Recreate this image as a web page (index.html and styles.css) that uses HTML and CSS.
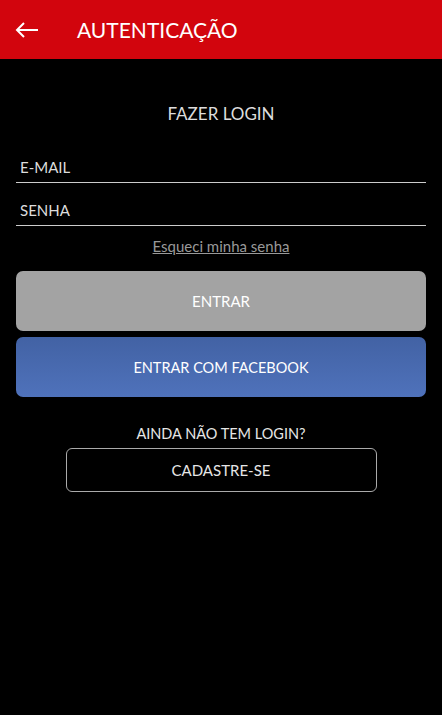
FILE: index.html
```html
<!DOCTYPE html>
<html lang="pt">
<head>
  <meta charset="UTF-8" />
  <meta name="viewport" content="width=device-width, initial-scale=1.0" />
  <title>Autenticação</title>
  <link rel="stylesheet" href="styles.css">
</head>
<body>
  <header class="topbar">
    <svg class="back" width="24" height="16" viewBox="0 0 24 16">
      <path d="M23 8H2M9 1L2 8l7 7" fill="none" stroke="#fff" stroke-width="2" />
    </svg>
    <h1>AUTENTICAÇÃO</h1>
  </header>

  <main class="container">
    <h2>FAZER LOGIN</h2>

    <div class="field">E-MAIL</div>
    <div class="field">SENHA</div>

    <a class="forgot" href="#">Esqueci minha senha</a>

    <button class="btn btn-login">ENTRAR</button>
    <button class="btn btn-facebook">ENTRAR COM FACEBOOK</button>

    <p class="signup-text">AINDA NÃO TEM LOGIN?</p>
    <button class="btn-signup">CADASTRE-SE</button>
  </main>
</body>
</html>
```

FILE: styles.css
```css
body {
  margin: 0;
  font-family: Lato, 'Noto Sans', sans-serif;
  background: #000;
  color: #e6e6e6;
  min-height: 100vh;
}

.topbar {
  background: #d2050d;
  height: 59px;
  display: flex;
  align-items: center;
  padding-left: 15px;
}

.topbar .back {
  display: block;
}

.topbar h1 {
  margin: 0 0 0 38px;
  font-size: 21px;
  font-weight: 400;
  color: #fff;
}

.container {
  padding: 0 16px;
  display: flex;
  flex-direction: column;
  align-items: center;
}

h2 {
  margin: 44px 0 34px;
  font-size: 17px;
  font-weight: 400;
  color: #ddd;
}

.field {
  align-self: stretch;
  font-size: 15px;
  padding: 0 4px 6px;
  border-bottom: 1.5px solid #ccc;
  color: #ddd;
  margin-bottom: 18px;
  line-height: 18px;
}

.forgot {
  margin-top: -7px;
  font-size: 15px;
  color: #999;
  text-decoration: underline;
  line-height: 18px;
}

.btn {
  align-self: stretch;
  height: 60px;
  border: none;
  border-radius: 7px;
  color: #fff;
  font-family: inherit;
  font-size: 15px;
}

.btn-login {
  margin-top: 16px;
  background: #a3a3a3;
}

.btn-facebook {
  margin-top: 6px;
  font-size: 14.5px;
  background: linear-gradient(#4262a4, #4f72bb);
}

.signup-text {
  margin: 28px 0 6px;
  font-size: 14.5px;
  color: #e6e6e6;
}

.btn-signup {
  width: 311px;
  height: 44px;
  background: #000;
  border: 1px solid #aaa;
  border-radius: 6px;
  color: #e6e6e6;
  font-family: inherit;
  font-size: 15px;
}
```
